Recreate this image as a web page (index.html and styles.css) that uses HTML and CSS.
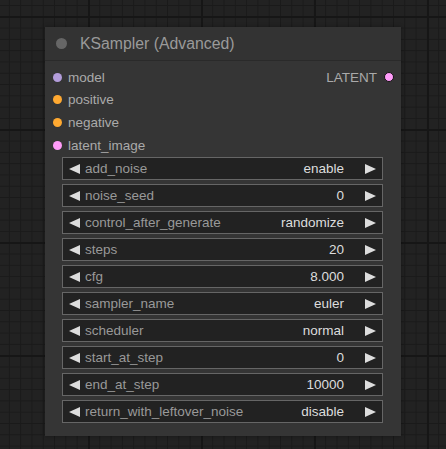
FILE: index.html
```html
<!DOCTYPE html>
<html>
<head>
<meta charset="utf-8">
<link rel="stylesheet" href="styles.css">
</head>
<body>
<div class="canvas">
  <div class="node">
    <div class="title"><span class="tdot"></span><span class="ttext">KSampler (Advanced)</span></div>
    <div class="body">
      <div class="slots">
        <div class="row"><div class="in"><span class="dot model"></span>model</div><div class="out">LATENT<span class="dot latent ring"></span></div></div>
        <div class="row"><div class="in"><span class="dot cond"></span>positive</div></div>
        <div class="row"><div class="in"><span class="dot cond"></span>negative</div></div>
        <div class="row"><div class="in"><span class="dot latent"></span>latent_image</div></div>
      </div>
      <div class="widgets">
        <div class="widget"><span class="arrow left"></span><span class="label">add_noise</span><span class="value">enable</span><span class="arrow right"></span></div>
        <div class="widget"><span class="arrow left"></span><span class="label">noise_seed</span><span class="value">0</span><span class="arrow right"></span></div>
        <div class="widget"><span class="arrow left"></span><span class="label">control_after_generate</span><span class="value">randomize</span><span class="arrow right"></span></div>
        <div class="widget"><span class="arrow left"></span><span class="label">steps</span><span class="value">20</span><span class="arrow right"></span></div>
        <div class="widget"><span class="arrow left"></span><span class="label">cfg</span><span class="value">8.000</span><span class="arrow right"></span></div>
        <div class="widget"><span class="arrow left"></span><span class="label">sampler_name</span><span class="value">euler</span><span class="arrow right"></span></div>
        <div class="widget"><span class="arrow left"></span><span class="label">scheduler</span><span class="value">normal</span><span class="arrow right"></span></div>
        <div class="widget"><span class="arrow left"></span><span class="label">start_at_step</span><span class="value">0</span><span class="arrow right"></span></div>
        <div class="widget"><span class="arrow left"></span><span class="label">end_at_step</span><span class="value">10000</span><span class="arrow right"></span></div>
        <div class="widget"><span class="arrow left"></span><span class="label">return_with_leftover_noise</span><span class="value">disable</span><span class="arrow right"></span></div>
      </div>
    </div>
  </div>
</div>
</body>
</html>
```

FILE: styles.css
```css
html, body {
  margin: 0;
  padding: 0;
}
body {
  width: 446px;
  height: 449px;
  overflow: hidden;
  font-family: "Liberation Sans", Arial, sans-serif;
}
.canvas {
  width: 446px;
  height: 449px;
  box-sizing: border-box;
  padding: 27px 0 0 45px;
  background-color: #222222;
  background-image:
    linear-gradient(to right, #161616 0, #161616 2px, transparent 2px),
    linear-gradient(to bottom, #161616 0, #161616 2px, transparent 2px),
    linear-gradient(to right, #1a1a1a 0, #1a1a1a 1px, transparent 1px),
    linear-gradient(to bottom, #1a1a1a 0, #1a1a1a 1px, transparent 1px);
  background-size: 113px 113px, 113px 113px, 11.3px 11.3px, 11.3px 11.3px;
  background-position: 88px 0, 0 16px, 8.9px 0, 0 5px;
}
.node {
  width: 356px;
  height: 409px;
  background: #353535;
  box-shadow: 0 0 4px rgba(0,0,0,0.35);
  display: flex;
  flex-direction: column;
}
.title {
  height: 33px;
  background: #333333;
  border-bottom: 1px solid #2a2a2a;
  display: flex;
  align-items: center;
  padding-left: 11px;
}
.tdot {
  width: 11px;
  height: 11px;
  border-radius: 50%;
  background: #666666;
  margin-right: 13px;
}
.ttext {
  color: #9a9a9a;
  font-size: 15.8px;
  line-height: 1;
}
.body {
  padding-top: 5px;
  display: flex;
  flex-direction: column;
}
.row {
  height: 22.6px;
  display: flex;
  align-items: center;
  justify-content: space-between;
  padding: 0 7px 0 8px;
  font-size: 13.5px;
  color: #aaaaaa;
}
.in, .out {
  display: flex;
  align-items: center;
}
.dot {
  width: 9px;
  height: 9px;
  border-radius: 50%;
  margin-right: 6px;
  box-sizing: border-box;
}
.out .dot {
  margin-right: 0;
  margin-left: 7px;
  width: 10px;
  height: 10px;
}
.model { background: #b39ddb; }
.cond { background: #ffa931; }
.latent { background: #ff9cf9; }
.ring { border: 1px solid #111111; }
.widgets {
  display: flex;
  flex-direction: column;
  gap: 4px;
  padding: 1px 18px 0 17px;
}
.widget {
  height: 23px;
  box-sizing: border-box;
  background: #222222;
  border: 1px solid #666666;
  display: flex;
  align-items: center;
  padding: 0 6px 0 6px;
  font-size: 13.5px;
}
.arrow {
  width: 0;
  height: 0;
  border-top: 5.5px solid transparent;
  border-bottom: 5.5px solid transparent;
  flex: none;
}
.arrow.left {
  border-right: 11px solid #dddddd;
  margin-right: 5px;
}
.arrow.right {
  border-left: 11px solid #dddddd;
  margin-left: 21px;
}
.label {
  color: #999999;
  flex: 1;
  white-space: nowrap;
}
.value {
  color: #dddddd;
  white-space: nowrap;
}
```
